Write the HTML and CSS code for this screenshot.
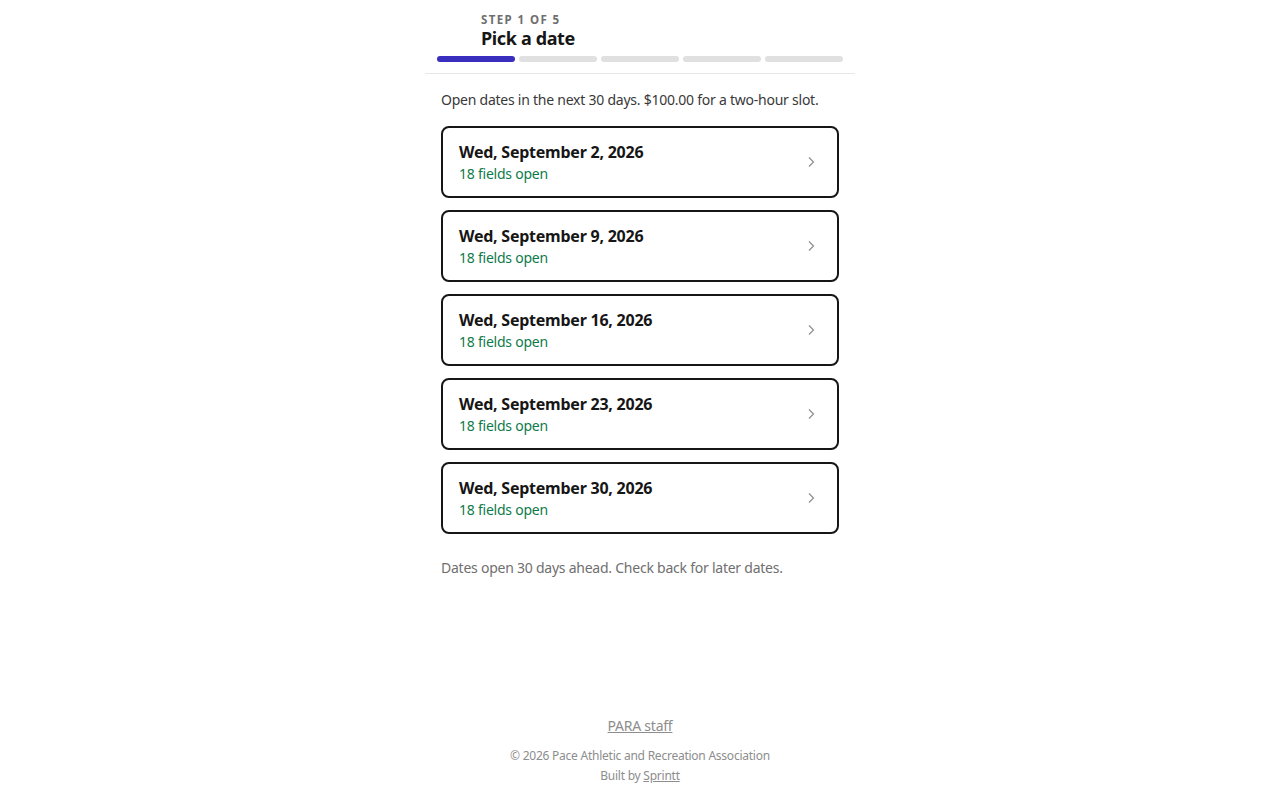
FILE: index.html
```html
<!DOCTYPE html>
<html lang="en">
<head>
<meta charset="utf-8">
<title>Pick a date</title>
<link rel="stylesheet" href="styles.css">
</head>
<body>
<div class="page">
  <header class="top">
    <div class="title-row">
      <div class="back-slot"></div>
      <div class="titles">
        <div class="step">STEP 1 OF 5</div>
        <h1 class="title">Pick a date</h1>
      </div>
    </div>
    <div class="progress">
      <span class="seg active"></span>
      <span class="seg"></span>
      <span class="seg"></span>
      <span class="seg"></span>
      <span class="seg"></span>
    </div>
  </header>
  <main class="content">
    <p class="intro">Open dates in the next 30 days. $100.00 for a two-hour slot.</p>
    <ul class="dates">
      <li><a class="date-card" href="#"><span class="date-text"><span class="date">Wed, September 2, 2026</span><span class="avail">18 fields open</span></span><svg class="chev" width="16" height="16" viewBox="0 0 16 16"><path d="M6 3.5 L10.5 8 L6 12.5" fill="none" stroke="currentColor" stroke-width="1.2"/></svg></a></li>
      <li><a class="date-card" href="#"><span class="date-text"><span class="date">Wed, September 9, 2026</span><span class="avail">18 fields open</span></span><svg class="chev" width="16" height="16" viewBox="0 0 16 16"><path d="M6 3.5 L10.5 8 L6 12.5" fill="none" stroke="currentColor" stroke-width="1.2"/></svg></a></li>
      <li><a class="date-card" href="#"><span class="date-text"><span class="date">Wed, September 16, 2026</span><span class="avail">18 fields open</span></span><svg class="chev" width="16" height="16" viewBox="0 0 16 16"><path d="M6 3.5 L10.5 8 L6 12.5" fill="none" stroke="currentColor" stroke-width="1.2"/></svg></a></li>
      <li><a class="date-card" href="#"><span class="date-text"><span class="date">Wed, September 23, 2026</span><span class="avail">18 fields open</span></span><svg class="chev" width="16" height="16" viewBox="0 0 16 16"><path d="M6 3.5 L10.5 8 L6 12.5" fill="none" stroke="currentColor" stroke-width="1.2"/></svg></a></li>
      <li><a class="date-card" href="#"><span class="date-text"><span class="date">Wed, September 30, 2026</span><span class="avail">18 fields open</span></span><svg class="chev" width="16" height="16" viewBox="0 0 16 16"><path d="M6 3.5 L10.5 8 L6 12.5" fill="none" stroke="currentColor" stroke-width="1.2"/></svg></a></li>
    </ul>
    <p class="note">Dates open 30 days ahead. Check back for later dates.</p>
  </main>
  <footer class="foot">
    <a class="staff" href="#">PARA staff</a>
    <div class="copy">© 2026 Pace Athletic and Recreation Association</div>
    <div class="built">Built by <a href="#">Sprintt</a></div>
  </footer>
</div>
</body>
</html>
```
FILE: styles.css
```css
* { box-sizing: border-box; }
html, body { margin: 0; padding: 0; background: #fff; }
body {
  font-family: "Noto Sans", "Liberation Sans", sans-serif;
  color: #161616;
  letter-spacing: -0.015em;
}
.page {
  width: 430px;
  margin: 0 auto;
  min-height: 800px;
  display: flex;
  flex-direction: column;
}
.top {
  padding: 12px 12px 11px;
  border-bottom: 1px solid #e6e6e6;
}
.title-row { display: flex; }
.back-slot { width: 44px; flex: none; }
.step {
  font-size: 11.5px;
  font-weight: 700;
  letter-spacing: 1.4px;
  color: #6f6f6f;
  line-height: 14px;
  padding-top: 1px;
}
.title {
  margin: -1px 0 0;
  font-size: 18px;
  font-weight: 700;
  line-height: 24px;
  color: #161616;
  letter-spacing: -0.02em;
}
.progress {
  display: grid;
  grid-template-columns: repeat(5, 1fr);
  gap: 4px;
  margin-top: 6px;
}
.seg { height: 6px; border-radius: 3px; background: #e0e0e0; }
.seg.active { background: #3a2ebf; }
.content { padding: 16px 16px 0; }
.intro {
  margin: 0 0 16px;
  font-size: 14px;
  line-height: 20px;
  color: #393939;
}
.dates {
  list-style: none;
  margin: 0;
  padding: 0;
  display: flex;
  flex-direction: column;
  gap: 12px;
}
.date-card {
  display: flex;
  align-items: center;
  justify-content: space-between;
  height: 72px;
  padding: 0 18px 0 16px;
  border: 2px solid #161616;
  border-radius: 8px;
  text-decoration: none;
  color: inherit;
}
.date-text { display: flex; flex-direction: column; }
.date { font-size: 16px; font-weight: 700; line-height: 22px; color: #161616; }
.avail { font-size: 14px; line-height: 20px; margin-top: 1px; color: #0e7a4a; }
.chev { color: #8d8d8d; }
.note {
  margin: 24px 0 0;
  font-size: 14px;
  line-height: 20px;
  color: #6f6f6f;
}
.foot {
  margin-top: auto;
  padding: 0 0 14px;
  text-align: center;
  font-size: 12px;
  line-height: 20px;
  color: #8d8d8d;
}
.staff {
  display: inline-block;
  font-size: 14px;
  color: #8d8d8d;
  margin-bottom: 10px;
}
.built a { color: #8d8d8d; }
```
